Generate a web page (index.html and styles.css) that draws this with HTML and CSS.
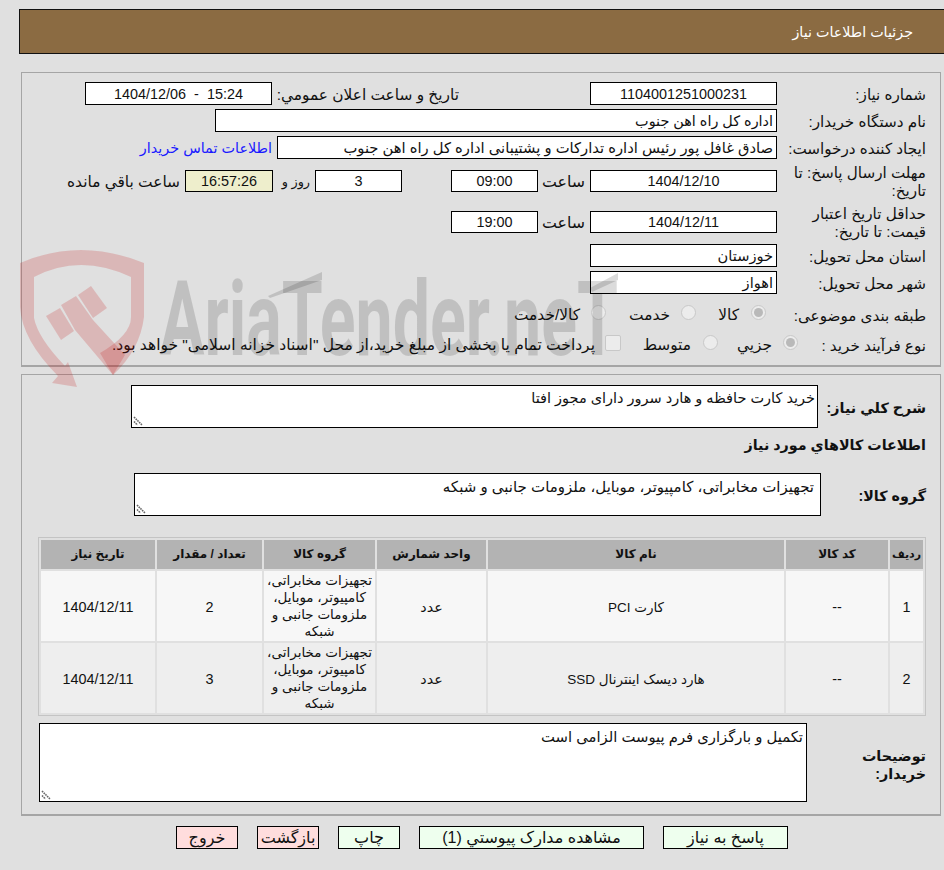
FILE: index.html
```html
<!DOCTYPE html>
<html lang="fa" dir="rtl">
<head>
<meta charset="utf-8">
<title>جزئیات اطلاعات نیاز</title>
<link rel="stylesheet" href="styles.css">
</head>
<body>
<div class="page">
  <svg class="watermark" width="640" height="160" viewBox="0 240 640 160" aria-hidden="true">
    <g class="wm-shield">
      <path fill-rule="evenodd" d="M20 263 Q80 237 144 263 V317 Q140 350 113 375 L100 353 Q131 335 131 317 V277 Q80 253 34 277 V318 Q38 338 65 366 L68 362 L77 387 L52 383 L58 376 Q22 340 20 307 Z"/>
      <path d="M46 316 L60 308 L74 331 L61 340 Z"/>
      <path d="M61 305 L76 296 L93 320 L125 355 L113 375 L75 330 Z"/>
      <path d="M78 295 L91 286 L107 308 L93 318 Z"/>
    </g>
    <text class="wm-text" x="160" y="355" textLength="458" lengthAdjust="spacingAndGlyphs">AriaTender.neT</text>
    <g class="wm-bars">
      <path d="M268 296 L322 272 V280 L270 298 Z"/>
      <path d="M590 288 L618 273 V280 L592 292 Z"/>
    </g>
  </svg>
  <header class="title-bar">جزئیات اطلاعات نیاز</header>

  <section class="panel panel-info">
    <div class="row">
      <div class="label">شماره نیاز:</div>
      <div class="field field-date center">1104001251000231</div>
      <div class="label-public">تاریخ و ساعت اعلان عمومي:</div>
      <div class="field field-date center ltr">1404/12/06 - 15:24</div>
    </div>
    <div class="row">
      <div class="label">نام دستگاه خریدار:</div>
      <div class="field field-buyer">اداره کل راه اهن جنوب</div>
    </div>
    <div class="row">
      <div class="label">ایجاد کننده درخواست:</div>
      <div class="field field-creator">صادق غافل پور رئیس اداره تدارکات و پشتیبانی اداره کل راه اهن جنوب</div>
      <a class="contact" href="#">اطلاعات تماس خریدار</a>
    </div>
    <div class="row row-tall row-deadline">
      <div class="label">مهلت ارسال پاسخ: تا تاریخ:</div>
      <div class="field field-date center">1404/12/10</div>
      <span class="unit unit-hour">ساعت</span>
      <div class="field field-time center">09:00</div>
      <div class="field field-time field-days center">3</div>
      <span class="unit unit-day">روز و</span>
      <div class="field field-timer center">16:57:26</div>
      <span class="unit unit-left">ساعت باقي مانده</span>
    </div>
    <div class="row row-tall row-validity">
      <div class="label">حداقل تاریخ اعتبار قیمت: تا تاریخ:</div>
      <div class="field field-date center">1404/12/11</div>
      <span class="unit unit-hour">ساعت</span>
      <div class="field field-time center">19:00</div>
    </div>
    <div class="row">
      <div class="label">استان محل تحویل:</div>
      <div class="field field-date">خوزستان</div>
    </div>
    <div class="row">
      <div class="label">شهر محل تحویل:</div>
      <div class="field field-date">اهواز</div>
    </div>
    <div class="row row-choice row-subject">
      <div class="label">طبقه بندی موضوعی:</div>
      <span class="radio checked"></span><span class="opt opt-goods">کالا</span>
      <span class="radio"></span><span class="opt opt-service">خدمت</span>
      <span class="radio"></span><span class="opt opt-both">کالا/خدمت</span>
    </div>
    <div class="row row-choice row-process">
      <div class="label">نوع فرآیند خرید :</div>
      <span class="radio checked"></span><span class="opt opt-small">جزيي</span>
      <span class="radio"></span><span class="opt opt-medium">متوسط</span>
      <span class="check"></span><span class="opt opt-note">پرداخت تمام یا بخشی از مبلغ خرید،از محل "اسناد خزانه اسلامی" خواهد بود.</span>
    </div>
  </section>

  <section class="panel panel-goods">
    <div class="desc-row">
      <div class="label-bold">شرح کلي نیاز:</div>
      <div class="textbox tb-desc">خرید کارت حافظه و هارد سرور دارای مجوز افتا<svg class="grip" viewBox="0 0 10 10"><path d="M1 1L9 9M1 5.5L4.5 9" /></svg></div>
    </div>
    <h2 class="heading">اطلاعات کالاهاي مورد نیاز</h2>
    <div class="group-row">
      <div class="label-bold">گروه کالا:</div>
      <div class="textbox tb-group">تجهیزات مخابراتی، کامپیوتر، موبایل، ملزومات جانبی و شبکه<svg class="grip" viewBox="0 0 10 10"><path d="M1 1L9 9M1 5.5L4.5 9" /></svg></div>
    </div>
    <table class="items">
      <thead>
        <tr>
          <th class="c-row">ردیف</th>
          <th class="c-code">کد کالا</th>
          <th class="c-name">نام کالا</th>
          <th class="c-unit">واحد شمارش</th>
          <th class="c-group">گروه کالا</th>
          <th class="c-qty">تعداد / مقدار</th>
          <th class="c-date">تاریخ نیاز</th>
        </tr>
      </thead>
      <tbody>
        <tr>
          <td class="num">1</td>
          <td class="num">--</td>
          <td class="mid">کارت PCI</td>
          <td class="num">عدد</td>
          <td>تجهیزات مخابراتی، کامپیوتر، موبایل، ملزومات جانبی و شبکه</td>
          <td class="num">2</td>
          <td class="num">1404/12/11</td>
        </tr>
        <tr>
          <td class="num">2</td>
          <td class="num">--</td>
          <td class="mid">هارد دیسک اینترنال SSD</td>
          <td class="num">عدد</td>
          <td>تجهیزات مخابراتی، کامپیوتر، موبایل، ملزومات جانبی و شبکه</td>
          <td class="num">3</td>
          <td class="num">1404/12/11</td>
        </tr>
      </tbody>
    </table>
    <div class="notes-row">
      <div class="label-bold">توضیحات خریدار:</div>
      <div class="textbox tb-notes">تکمیل و بارگزاری فرم پیوست الزامی است<svg class="grip" viewBox="0 0 10 10"><path d="M1 1L9 9M1 5.5L4.5 9" /></svg></div>
    </div>
  </section>

  <nav class="actions">
    <button class="btn go b-reply">پاسخ به نیاز</button>
    <button class="btn go b-docs">مشاهده مدارک پیوستي (1)</button>
    <button class="btn go b-print">چاپ</button>
    <button class="btn stop b-back">بازگشت</button>
    <button class="btn stop b-exit">خروج</button>
  </nav>
</div>
</body>
</html>
```
FILE: styles.css
```css
* { box-sizing: border-box; }
html, body { margin: 0; height: 870px; overflow: hidden; }
body {
  background: #e0e0e0;
  color: #111;
  font: 14.4px/17px "Liberation Sans", "DejaVu Sans", sans-serif;
}
.page { position: relative; width: 944px; height: 870px; overflow: hidden; padding-top: 9px; }
.watermark { position: absolute; left: 0; top: 240px; z-index: 3; pointer-events: none; }
.wm-shield path { fill: rgba(195, 0, 0, .18); }
.wm-bars path { fill: rgba(0, 0, 0, .14); }
.wm-text {
  direction: ltr;
  font: 700 104px "Roboto", sans-serif;
  fill: rgba(0, 0, 0, .14);
}

.title-bar {
  margin-right: -10px;
  width: 935px;
  height: 45px;
  background: #8b6b42;
  border: 1px solid #111;
  color: #fff;
  font-size: 14.3px;
  line-height: 45px;
  padding-right: 40px;
}
.panel {
  margin-right: 3px;
  width: 920px;
  border: 1px solid #a5a5a5;
  border-bottom-width: 2px;
  padding-right: 14px;
}
.panel-info { margin-top: 18px; height: 295px; padding-top: 9px; }
.panel-goods { margin-top: 7px; height: 442px; padding-top: 10px; }

.row { display: flex; align-items: center; height: 23px; margin-bottom: 4px; }
.label { width: 149px; flex: none; font-size: 15.2px; line-height: 18px; padding-top: 2px; }
.field {
  height: 23px;
  background: #fff;
  border: 1px solid #000;
  font-size: 14.6px;
  line-height: 23px;
  padding: 0 3px;
  white-space: nowrap;
  overflow: hidden;
  flex: none;
}
.center { text-align: center; font-size: 14.4px; }
.ltr { direction: ltr; word-spacing: 4px; }
.field-date { width: 187px; }
.field-buyer { width: 562px; font-size: 14.4px; }
.field-creator { width: 500px; font-size: 14.75px; }
.field-time { width: 87px; }
.field-days { margin-right: 49px; }
.field-timer { width: 88px; background: #eeeecc; }
.label-public { margin: 0 131px 0 5px; width: 182px; white-space: nowrap; font-size: 15.4px; padding-top: 2px; }
.contact { color: #1a1aff; text-decoration: none; margin-right: 5px; white-space: nowrap; padding-top: 2px; }
.unit { flex: none; white-space: nowrap; font-size: 15.4px; padding-top: 2px; }
.unit-hour { width: 52px; padding-right: 5px; font-size: 15.8px; }
.unit-day { width: 42px; padding-right: 5px; font-size: 12.8px; }
.unit-left { padding-right: 5px; }
.row-tall { height: 33px; }
.row-deadline { margin-top: 5px; margin-bottom: 8px; }
.row-deadline .field, .row-validity .field { height: 22px; line-height: 21px; }
.row-validity { margin-bottom: 6px; }
.row-choice { height: 17px; margin-bottom: 13px; }
.row-subject { margin-top: 12px; }
.row-subject .label { width: 160px; }
.row-process .label { width: 128px; }
.radio {
  width: 15px; height: 15px; border-radius: 50%;
  background: #ececec; border: 1px solid #c8c8c8;
  flex: none; position: relative; margin-top: -4px;
}
.radio.checked::after {
  content: ""; position: absolute; inset: 2px; border-radius: 50%; background: #b9b9b9;
}
.check {
  width: 16px; height: 16px; border-radius: 2px;
  background: #ececec; border: 1px solid #c8c8c8; flex: none; margin-top: -4px;
}
.opt { white-space: nowrap; flex: none; font-size: 15.4px; }
.opt-goods { width: 55px; padding-right: 12px; }
.opt-service { width: 75px; padding-right: 11px; }
.opt-both { padding-right: 11px; }
.opt-small { width: 65px; padding-right: 11px; }
.opt-medium { width: 82px; padding-right: 12px; }
.opt-note { padding-right: 10px; font-size: 15.5px; }

.label-bold { font-weight: 700; font-size: 14.3px; line-height: 18px; flex: none; }
.textbox {
  background: #fff; border: 1px solid #000; position: relative; padding: 4px 2px; flex: none;
}
.grip {
  position: absolute; left: 1px; bottom: 1px; width: 10px; height: 10px;
}
.grip path { stroke: #666; stroke-width: 1.6; stroke-dasharray: 1.6 .8; fill: none; }
.desc-row { display: flex; align-items: center; height: 43px; }
.desc-row .label-bold { width: 108px; padding-top: 3px; }
.tb-desc { width: 687px; height: 43px; font-size: 14.5px; }
.heading { font-size: 14.3px; line-height: 18px; margin: 8px 0 19px; font-weight: 700; }
.group-row { display: flex; align-items: center; height: 43px; }
.group-row .label-bold { width: 105px; padding-top: 3px; }
.tb-group { width: 687px; height: 43px; padding: 4px 6px; font-size: 15px; }

.items {
  width: 888px;
  margin: 21px 0 7px;
  border: 1px solid #c4c4c4;
  border-collapse: separate;
  border-spacing: 2px;
  table-layout: fixed;
  text-align: center;
}
.items th { background: #b3b3b3; height: 29px; font-size: 12px; font-weight: 700; padding: 0; }
.items th.c-row { font-size: 11px; }
.items td { padding: 0 2px; height: 70px; line-height: 17px; font-size: 13.5px; }
.items td.num { font-size: 14.4px; padding-top: 2px; }
.items td.mid { padding-top: 2px; }
.items tbody tr:nth-child(1) td { background: #f7f7f7; }
.items tbody tr:nth-child(2) td { background: #eeeeee; }
.c-row { width: 33px; }
.c-code { width: 102px; }
.c-name { width: 296px; }
.c-unit { width: 109px; }
.c-group { width: 111px; }
.c-qty { width: 105px; }

.notes-row { display: flex; align-items: center; height: 79px; }
.notes-row .label-bold { width: 119px; padding-left: 30px; padding-top: 4px; }
.tb-notes { width: 768px; height: 79px; padding: 5px 3px; font-size: 14.8px; }

.actions { display: flex; gap: 19px; padding-right: 156px; margin-top: 10px; }
.btn {
  height: 23px; border: 1px solid #000; padding: 0;
  font: 16px/21px "Liberation Sans", "DejaVu Sans", sans-serif; color: #111; flex: none;
}
.go { background: #eeffee; }
.stop { background: #ffdddd; }
.b-reply { width: 125px; }
.b-docs { width: 225px; }
.b-print { width: 62px; }
.b-back, .b-exit { width: 62px; }
```
